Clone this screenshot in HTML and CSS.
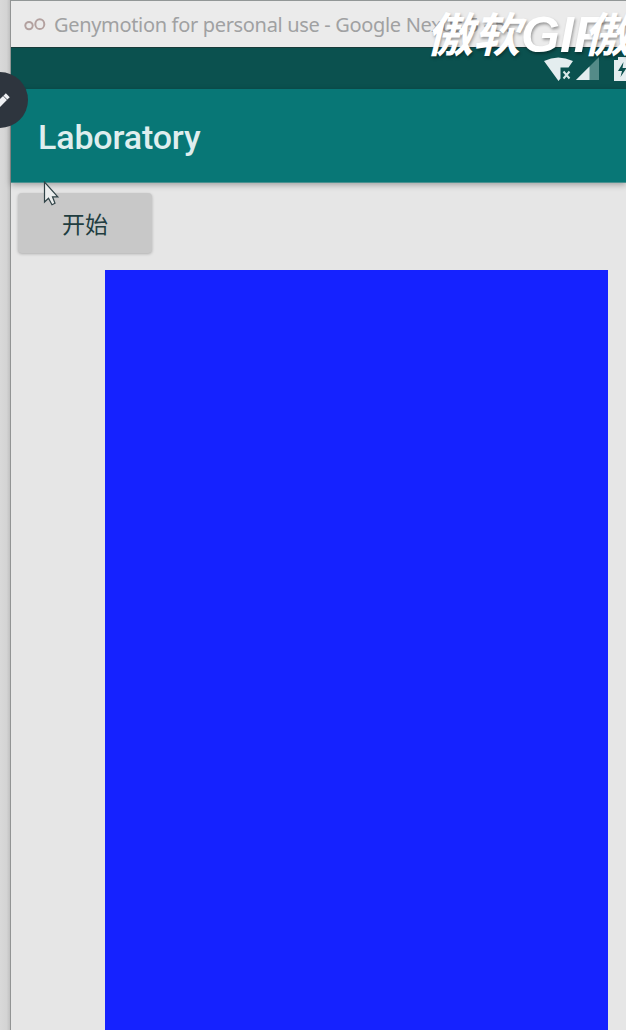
FILE: index.html
```html
<!DOCTYPE html>
<html lang="zh-CN">
<head>
<meta charset="utf-8">
<title>Laboratory</title>
<link rel="stylesheet" href="styles.css">
</head>
<body>
<div class="desktop">
  <div class="gutter"></div>
  <main class="window">
    <header class="titlebar">
      <svg class="logo" width="22" height="14" viewBox="0 0 22 14" fill="none" stroke="#b3a19f" stroke-width="2"><circle cx="5" cy="7.6" r="3.7"/><ellipse cx="15.8" cy="6.2" rx="4.5" ry="4.9"/></svg>
      <span class="caption">Genymotion for personal use - Google Nexus 5 - 5...</span>
    </header>
    <div class="statusbar">
      <svg class="wifi" width="30" height="26" viewBox="0 0 30 26"><path d="M0 4Q14-3 29 4L24.500 10.500H16.500V21.500L14.500 24Z" fill="#e4edef"/><path d="M19.500 14.500l6 7m0-7l-6 7" stroke="#d8e8e8" stroke-width="2"/></svg>
      <svg class="signal" width="24" height="24" viewBox="0 0 24 24"><path d="M23 0V23H0Z" fill="#548b88"/><path d="M13.500 9.500V23H0Z" fill="#e4edef"/></svg>
      <svg class="battery" width="18" height="24" viewBox="0 0 18 24"><path d="M0 3H4V0H14V3H18V24H0Z" fill="#e4edef"/><path d="M9.500 5L4 14H8L6.500 20L12.500 11H8.500Z" fill="#0c504e"/></svg>
    </div>
    <div class="toolbar"><h1>Laboratory</h1></div>
    <section class="content">
      <button class="start">开始</button>
      <div class="canvas"></div>
    </section>
  </main>
  <div class="edit"><svg width="28" height="56" viewBox="0 0 28 56"><path d="M-4 35L5 26" stroke="#eff1f4" stroke-width="5.500"/><path d="M5.400 25.600L7.800 23.200" stroke="#eff1f4" stroke-width="5.500"/></svg></div>
  <div class="watermark"><span>傲软</span><span class="latin">GIF</span><span>傲软</span></div>
  <svg class="cursor" width="18" height="26" viewBox="0 0 18 26"><path d="M1.500 1V21L5.500 17.200L9 23.800L12 22.300L9.500 15.800H14.800Z" fill="#ebeded" stroke="#304347" stroke-width="1.200"/></svg>
</div>
</body>
</html>
```
FILE: styles.css
```css
* { box-sizing: border-box; }
body { margin: 0; }
.desktop {
  position: relative;
  display: flex;
  width: 626px;
  height: 1030px;
  overflow: hidden;
  background: #e6e6e6;
}
.gutter {
  flex: 0 0 11px;
  background: linear-gradient(90deg, #d9d9d9, #d4d4d4 60%, #c3c3c3 88%, #929494 92%);
}
.window {
  flex: 1;
  min-width: 0;
  display: flex;
  flex-direction: column;
}
.titlebar {
  flex: 0 0 48px;
  display: flex;
  align-items: center;
  gap: 8px;
  padding: 1px 0 0 13px;
  background: #ebebeb;
  border-top: 1px solid #929797;
  border-bottom: 1px solid #183b3a;
  overflow: hidden;
}
.logo { flex: none; }
.caption {
  font: 20px/28px "Noto Sans", "Open Sans", sans-serif;
  letter-spacing: -.33px;
  color: #a0a1a2;
  white-space: nowrap;
}
.statusbar {
  flex: 0 0 41px;
  display: flex;
  align-items: flex-start;
  padding: 9px 0 0 533px;
  background: #0b514f;
  overflow: hidden;
}
.statusbar svg { flex: none; }
.signal { margin-left: 2px; }
.battery { margin-left: 14px; }
.toolbar {
  position: relative;
  flex: 0 0 94px;
  display: flex;
  align-items: center;
  padding: 3px 0 0 27px;
  background: #087776;
  border-bottom: 1px solid #4b9190;
  box-shadow: 0 2px 6px rgba(0, 0, 0, .3);
}
.toolbar h1 {
  margin: 0;
  font: 500 34px/38px Roboto, sans-serif;
  letter-spacing: -.15px;
  color: #dfeeee;
}
.content {
  flex: 1;
  padding: 10px 0 0 7px;
  background: #e6e6e6;
}
.start {
  display: block;
  width: 134px;
  height: 60px;
  padding: 0;
  border: 0;
  border-radius: 4px;
  background: #c8c8c8;
  box-shadow: 0 1px 3px rgba(0, 0, 0, .25);
  font: 23px/58px "Noto Sans CJK SC", sans-serif;
  color: #213d40;
}
.canvas {
  width: 503px;
  height: 760px;
  margin: 17px 0 0 87px;
  background: #1522ff;
}
.edit {
  position: absolute;
  left: -28px;
  top: 72px;
  width: 56px;
  height: 56px;
  border-radius: 50%;
  background: #2e353e;
}
.edit svg { display: block; margin-left: 28px; }
.watermark {
  position: absolute;
  left: 426px;
  top: -2px;
  display: flex;
  align-items: baseline;
  font: italic 700 47px/68px "Noto Sans CJK SC", sans-serif;
  color: #fff;
  white-space: nowrap;
  text-shadow: 1px 2px 3px rgba(0, 0, 0, .35);
}
.latin {
  margin: 0 -21px 0 1px;
  font-family: "Liberation Sans", sans-serif;
  font-size: 50px;
}
.cursor { position: absolute; left: 43px; top: 181px; }
```
